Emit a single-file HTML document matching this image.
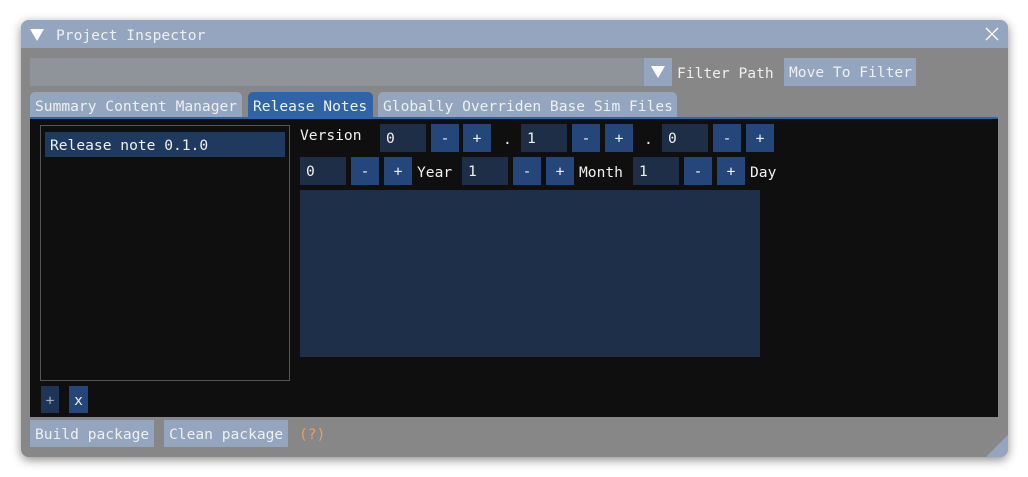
<!DOCTYPE html><html><head><style>
*{margin:0;padding:0;box-sizing:border-box}
body{width:1028px;height:477px;background:#fff;position:relative;overflow:hidden;font-family:"DejaVu Sans Mono","Liberation Mono",monospace;font-size:14.6px;color:#f0f0f0}
.a{position:absolute}
.win{left:21px;top:20px;width:987px;height:437px;background:#878787;border-radius:8px;box-shadow:0 3px 10px rgba(0,0,0,.45);overflow:hidden}
.t{line-height:29px;height:29px;white-space:pre}
.in{background:#1e2e47;height:28px;line-height:30px;padding-left:6px}
.b{background:#24467a;height:28px;line-height:30px;text-align:center;width:28px}
.lb{background:#93a5bf;height:28px;line-height:30px;padding-left:5px}
</style></head><body>
<div class="a win">
 <div class="a" style="left:0;top:0;width:987px;height:28px;background:#93a5bf"></div>
 <svg class="a" style="left:9px;top:9px" width="14" height="12"><path d="M0 0H14L7 12Z" fill="#fff"/></svg>
 <div class="a t" style="left:35px;top:1px">Project Inspector</div>
 <svg class="a" style="left:964px;top:7px" width="14" height="14"><path d="M1 1L13 13M13 1L1 13" stroke="#fff" stroke-width="1.4"/></svg>
 <div class="a" style="left:9px;top:38px;width:615px;height:28px;background:#8f949b"></div>
 <div class="a" style="left:623px;top:38px;width:28px;height:28px;background:#93a5bf"></div>
 <svg class="a" style="left:630px;top:46px" width="14" height="12"><path d="M0 0H14L7 12Z" fill="#fff"/></svg>
 <div class="a t" style="left:656px;top:39px">Filter Path</div>
 <div class="a lb" style="left:763px;top:38px;width:132px">Move To Filter</div>
 <div class="a t" style="left:9px;top:72px;width:212px;height:26px;background:#93a5bf;border-radius:5px 5px 0 0;padding-left:5px">Summary Content Manager</div>
 <div class="a t" style="left:227px;top:72px;width:125px;height:26px;background:#2f64a8;border-radius:5px 5px 0 0;padding-left:5px">Release Notes</div>
 <div class="a t" style="left:357px;top:72px;width:299px;height:26px;background:#93a5bf;border-radius:5px 5px 0 0;padding-left:5px">Globally Overriden Base Sim Files</div>
 <div class="a" style="left:9px;top:97px;width:968px;height:2px;background:#2f64a8"></div>
 <div class="a" style="left:9px;top:99px;width:968px;height:298px;background:#0f0f0f"></div>
 <div class="a" style="left:19px;top:105px;width:250px;height:256px;border:1px solid #555"></div>
 <div class="a t" style="left:24px;top:112px;width:240px;height:25px;line-height:27px;background:#1f3a5f;padding-left:5px">Release note 0.1.0</div>
 <div class="a b" style="left:20px;top:366px;width:18px;height:27px;background:#1d3556;color:#aab">+</div>
 <div class="a b" style="left:48px;top:366px;width:19px;height:27px">x</div>
 <div class="a t" style="left:279px;top:101px">Version</div>
 <div class="a in" style="left:359px;top:104px;width:46px">0</div>
 <div class="a b" style="left:410px;top:104px">-</div><div class="a b" style="left:442px;top:104px">+</div>
 <div class="a t" style="left:482px;top:105px">.</div>
 <div class="a in" style="left:500px;top:104px;width:46px">1</div>
 <div class="a b" style="left:551px;top:104px">-</div><div class="a b" style="left:584px;top:104px">+</div>
 <div class="a t" style="left:623px;top:105px">.</div>
 <div class="a in" style="left:641px;top:104px;width:46px">0</div>
 <div class="a b" style="left:692px;top:104px">-</div><div class="a b" style="left:725px;top:104px">+</div>
 <div class="a in" style="left:279px;top:137px;width:46px">0</div>
 <div class="a b" style="left:330px;top:137px">-</div><div class="a b" style="left:363px;top:137px">+</div>
 <div class="a t" style="left:396px;top:138px">Year</div>
 <div class="a in" style="left:441px;top:137px;width:46px">1</div>
 <div class="a b" style="left:492px;top:137px">-</div><div class="a b" style="left:525px;top:137px">+</div>
 <div class="a t" style="left:558px;top:138px">Month</div>
 <div class="a in" style="left:612px;top:137px;width:46px">1</div>
 <div class="a b" style="left:663px;top:137px">-</div><div class="a b" style="left:696px;top:137px">+</div>
 <div class="a t" style="left:729px;top:138px">Day</div>
 <div class="a" style="left:279px;top:170px;width:460px;height:167px;background:#1e2f4a"></div>
 <div class="a lb" style="left:9px;top:400px;width:124px;height:27px;line-height:29px">Build package</div>
 <div class="a lb" style="left:143px;top:400px;width:124px;height:27px;line-height:29px">Clean package</div>
 <div class="a t" style="left:278px;top:400px;color:#e8a060">(?)</div>
 <svg class="a" style="left:965px;top:415px" width="22" height="22"><path d="M22 0L22 22L0 22Z" fill="#93a5bf"/></svg>
</div>
</body></html>
